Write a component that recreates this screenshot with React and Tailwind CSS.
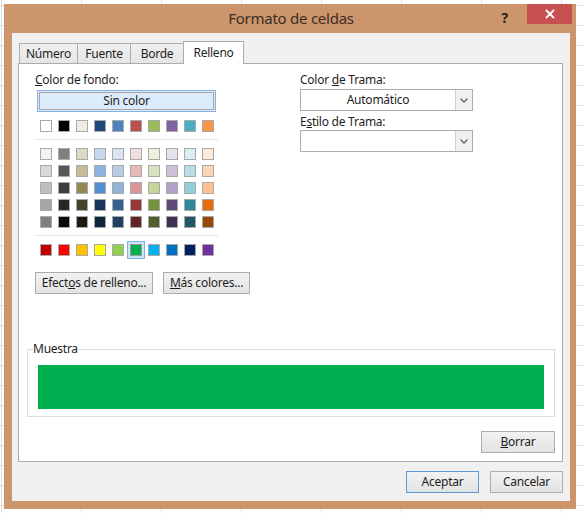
import React from 'react';

const themeRow = ['#ffffff', '#000000', '#eeece1', '#1f497d', '#4f81bd', '#c0504d', '#9bbb59', '#8064a2', '#4bacc6', '#f79646'];

const shades = [
  ['#f2f2f2', '#7f7f7f', '#ddd9c4', '#c6d9f0', '#dbe5f1', '#f2dcdb', '#ebf1dd', '#e5e0ec', '#dbeef3', '#fdeada'],
  ['#d8d8d8', '#595959', '#c4bd97', '#8db3e2', '#b8cce4', '#e5b9b7', '#d7e3bc', '#ccc1d9', '#b7dde8', '#fbd5b5'],
  ['#bfbfbf', '#3f3f3f', '#938953', '#548dd4', '#95b3d7', '#d99694', '#c3d69b', '#b2a2c7', '#92cddc', '#fac08f'],
  ['#a5a5a5', '#262626', '#494429', '#17365d', '#366092', '#953734', '#76923c', '#5f497a', '#31859b', '#e36c09'],
  ['#7f7f7f', '#0c0c0c', '#1d1b10', '#0f243e', '#244061', '#632423', '#4f6128', '#3f3151', '#205867', '#974806'],
];

const standard = ['#c00000', '#ff0000', '#ffc000', '#ffff00', '#92d050', '#00b050', '#00b0f0', '#0070c0', '#002060', '#7030a0'];

const Swatch = ({ color, selected }) => (
  <div
    className={
      selected
        ? 'w-[12px] h-[12px] border border-[#9a9a9a] shadow-[0_0_0_2px_#cde4f7,0_0_0_3px_#7eb4ea]'
        : 'w-[12px] h-[12px] border border-[#a9a9a9]'
    }
    style={{ backgroundColor: color }}
  />
);

const SwatchRow = ({ colors, className = '', selectedIndex = -1 }) => (
  <div className={`flex gap-[6px] ml-[5px] ${className}`}>
    {colors.map((c, i) => (
      <Swatch key={i} color={c} selected={i === selectedIndex} />
    ))}
  </div>
);

const Button = ({ children, className = '' }) => (
  <button
    className={`h-[22px] flex items-center justify-center border bg-gradient-to-b from-[#f2f2f2] to-[#e3e3e3] text-[#1e1e1e] ${className}`}
  >
    {children}
  </button>
);

const Chevron = () => (
  <svg width="8" height="5" viewBox="0 0 8 5">
    <path d="M0.5 0.5 L4 4 L7.5 0.5" fill="none" stroke="#606060" strokeWidth="1.3" />
  </svg>
);

const Dropdown = ({ value }) => (
  <div className="w-[173px] h-[22px] flex border border-[#abadb3] bg-white">
    <div className="flex-1 flex items-center justify-center">{value}</div>
    <div className="w-[17px] flex items-center justify-center border-l border-[#d0d0d0] bg-[#f0f0f0]">
      <Chevron />
    </div>
  </div>
);

const Tab = ({ label, width, active }) =>
  active ? (
    <div
      className="relative z-10 -ml-px -mb-px h-[23px] flex items-center justify-center border border-b-0 border-[#acacac] bg-white"
      style={{ width }}
    >
      {label}
    </div>
  ) : (
    <div
      className="-ml-px first:ml-0 h-[20px] flex items-center justify-center border border-b-0 border-[#acacac] bg-gradient-to-b from-[#f0f0f0] to-[#e5e5e5]"
      style={{ width }}
    >
      {label}
    </div>
  );

export default function App() {
  return (
    <div
      className="w-[583px] h-[513px] overflow-hidden pt-[4px] pl-[4px] bg-white bg-[linear-gradient(#dedede_1px,transparent_1px),linear-gradient(90deg,#dedede_1px,transparent_1px)] bg-[size:80px_20px] bg-[position:1px_5px] font-['Noto_Sans',sans-serif] text-[12px] tracking-[-0.25px] text-[#1e1e1e]"
    >
      <div className="w-[572px] h-[505px] bg-[#cd956b] flex flex-col pl-[8px] pr-[6px] pb-[8px]">
        {/* barra de título */}
        <div className="relative h-[29px] flex items-center justify-center">
          <span className="text-[15px] text-[#3b2e25] -mt-[1px]">Formato de celdas</span>
          <span className="absolute right-[62px] top-[3px] text-[14px] font-bold text-[#2b2016]">?</span>
          <div className="absolute right-[-2px] top-0 w-[45px] h-[20px] bg-[#c75050] flex items-center justify-center">
            <svg width="10" height="10" viewBox="0 0 10 10">
              <path d="M1 1 L9 9 M9 1 L1 9" stroke="#ffffff" strokeWidth="1.8" />
            </svg>
          </div>
        </div>

        {/* área cliente */}
        <div className="flex-1 bg-[#f0f0f0] flex flex-col pt-[8px] pb-[8px]">
          <div className="flex items-end h-[22px] ml-[7px]">
            <Tab label="Número" width={59} />
            <Tab label="Fuente" width={54} />
            <Tab label="Borde" width={54} />
            <Tab label="Relleno" width={61} active />
          </div>

          <div className="ml-[6px] mr-[7px] h-[399px] border border-[#acacac] bg-white flex flex-col pt-[8px]">
            <div className="flex pl-[16px]">
              {/* columna izquierda */}
              <div className="w-[265px] flex flex-col">
                <div className="h-[16px] leading-[16px]">
                  <span className="underline">C</span>olor de fondo:
                </div>
                <div className="mt-[2px] ml-[2px] w-[179px] h-[22px] border border-[#84b3e3] bg-[#dcebfc] p-[1px]">
                  <div className="h-full border border-[#a6a6a6] flex items-center justify-center">Sin color</div>
                </div>
                <SwatchRow colors={themeRow} className="mt-[8px]" />
                <div className="mt-[7px] w-[183px] h-px bg-[#e3e3e3]" />
                <div className="mt-[8px] flex flex-col gap-[5px]">
                  {shades.map((row, i) => (
                    <SwatchRow key={i} colors={row} />
                  ))}
                </div>
                <div className="mt-[7px] w-[183px] h-px bg-[#e3e3e3]" />
                <SwatchRow colors={standard} className="mt-[8px]" selectedIndex={5} />
                <div className="mt-[16px] flex gap-[10px]">
                  <Button className="w-[118px] border-[#adadad]">
                    Efect<span className="underline">o</span>s de relleno...
                  </Button>
                  <Button className="w-[87px] border-[#adadad]">
                    <span className="underline">M</span>ás colores...
                  </Button>
                </div>
              </div>

              {/* columna derecha */}
              <div className="flex flex-col">
                <div className="h-[16px] leading-[16px]">
                  Color <span className="underline">d</span>e Trama:
                </div>
                <div className="mt-[1px]">
                  <Dropdown value="Automático" />
                </div>
                <div className="mt-[3px] h-[16px] leading-[16px]">
                  E<span className="underline">s</span>tilo de Trama:
                </div>
                <Dropdown value="" />
              </div>
            </div>

            {/* muestra */}
            <div className="relative mt-[55px] ml-[8px] w-[528px] h-[68px] border border-[#dcdcdc] pt-[15px] pl-[10px]">
              <span className="absolute -top-[8px] left-[5px] bg-white leading-[14px]">Muestra</span>
              <div className="w-[506px] h-[44px] bg-[#00b050]" />
            </div>

            <div className="mt-[14px] mr-[7px] flex justify-end">
              <Button className="w-[74px] border-[#adadad]">
                <span className="underline">B</span>orrar
              </Button>
            </div>
          </div>

          <div className="mt-[9px] mr-[7px] flex justify-end gap-[11px]">
            <Button className="w-[73px] border-[#5e9bd6] from-[#eef4fa] to-[#e2ecf6]">Aceptar</Button>
            <Button className="w-[73px] border-[#adadad]">Cancelar</Button>
          </div>
        </div>
      </div>
    </div>
  );
}
